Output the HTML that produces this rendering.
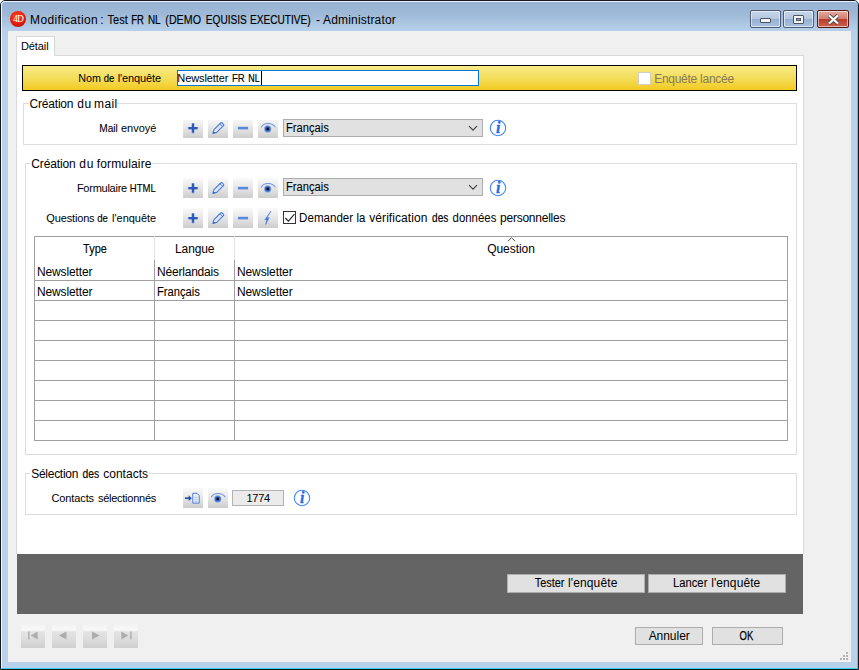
<!DOCTYPE html>
<html lang="fr">
<head>
<meta charset="utf-8">
<title>Modification : Test FR NL (DEMO EQUISIS EXECUTIVE) - Administrator</title>
<style>
*{box-sizing:border-box;margin:0;padding:0}
html,body{width:859px;height:670px;overflow:hidden;background:#fff}
body{font-family:"Liberation Sans",sans-serif;font-size:12px;color:#000;position:relative}
#win,#win *{position:absolute}
#win{left:0;top:0;width:859px;height:670px;overflow:hidden}
#frame{left:0;top:0;width:859px;height:670px;border:1px solid #14181c;border-radius:5px 5px 0 0;
 background:linear-gradient(to bottom,#97b3d3 0,#9fbad7 14px,#afc8e4 24px,#b6cfea 29px,#b9d2ec 40px,#b9d1ea 100%)}
#hl{left:1px;top:1px;width:857px;height:668px;border-top:1px solid rgba(255,255,255,.8);border-left:1px solid rgba(255,255,255,.85);border-right:1px solid #35d2f2;border-bottom:1px solid #35d2f2;border-radius:4px 4px 0 0}
#client{left:8px;top:31px;width:843px;height:631px;background:#f0f0f0}
.t{white-space:nowrap;line-height:16px;height:16px;display:block;transform-origin:0 0}
#panel{left:16px;top:55px;width:788px;height:499px;background:#fff;border:1px solid #d9d9d9;border-bottom:0}
#tab{left:16px;top:36px;width:39px;height:20px;background:#fff;border:1px solid #d9d9d9;border-bottom:0}
#dark{left:17px;top:554px;width:786px;height:60px;background:#646464}
#ybar{left:22px;top:65px;width:775px;height:26px;border:1px solid #000;background:linear-gradient(to bottom,#f8ea88 0,#f4de5c 50%,#f3ca20 100%)}
.ph{left:0;top:0;width:0;height:0}
.grp{border:1px solid #dcdcdc}
.leg{background:#fff}
.ibw{width:20px;overflow:hidden}
.ib{left:0;width:20px;height:20px;background:linear-gradient(to bottom,#fafafa 0,#ececec 35%,#dcdcdc 70%,#cdcdcd 100%)}
.ib svg{left:0;top:0}
.sel{background:#e1e1e1;border:1px solid #adadad}
.btn{background:#e1e1e1;border:1px solid #adadad}
.nav{width:24px;height:24px;background:linear-gradient(to bottom,#f2f2f2 0,#f8f8f8 6px,#e3e3e3 8px,#dbdbdb 16px,#cfcfcf 24px)}
.nav svg{left:0;top:0}
.hline{height:1px;background:#a0a0a0}
.vline{width:1px;background:#a0a0a0}
.cap{top:10px;height:18px;border:1px solid #4f5d75;border-radius:2px;box-shadow:inset 0 0 0 1px rgba(255,255,255,.55)}
</style>
</head>
<body>
<div id="win">
<div id="frame"></div>
<div id="hl"></div>
<div id="client"></div>
<svg style="left:9px;top:10px" width="18" height="18" viewBox="0 0 18 18"><defs><radialGradient id="rg" cx="0.45" cy="0.35" r="0.7"><stop offset="0" stop-color="#ff4a2a"/><stop offset="0.6" stop-color="#e8200e"/><stop offset="1" stop-color="#b81408"/></radialGradient></defs><circle cx="9" cy="9" r="8" fill="url(#rg)"/><text x="9" y="12.4" text-anchor="middle" font-family="Liberation Serif,serif" font-size="9.5" fill="#fff" letter-spacing="-0.8">4D</text></svg>
<div class="cap" style="left:750px;width:31px;background:linear-gradient(to bottom,#c6d6ea 0,#b3c7e1 48%,#97b0d2 52%,#abc2df 100%)"><div style="left:9px;top:7px;width:11px;height:5px;background:#f4f4f4;border:1px solid #4a5563;border-radius:1px"></div></div>
<div class="cap" style="left:783px;width:31px;background:linear-gradient(to bottom,#c6d6ea 0,#b3c7e1 48%,#97b0d2 52%,#abc2df 100%)"><div style="left:9px;top:4px;width:11px;height:9px;background:#f4f4f4;border:1px solid #4a5563;border-radius:1px"></div><div style="left:12px;top:7px;width:5px;height:3px;background:#8ea6c8;border:1px solid #4a5563"></div></div>
<div class="cap" style="left:817px;width:32px;border-color:#5a1a14;background:linear-gradient(to bottom,#e3aaa0 0,#d47e70 48%,#bb3c2a 52%,#cc6450 100%)"><svg style="left:9px;top:3px" width="13" height="11" viewBox="0 0 13 11"><path d="M2 1.5l9 8M11 1.5l-9 8" stroke="#4a4a4a" stroke-width="3.8"/><path d="M2 1.5l9 8M11 1.5l-9 8" stroke="#fff" stroke-width="2.3"/></svg></div>
<div id="panel"></div>
<div id="tab"></div>
<div id="dark"></div>
<div id="ybar"></div>
<div style="left:177px;top:70px;width:302px;height:16px;background:#fff;border:1px solid #0078d7"></div>
<div style="left:261px;top:71px;width:1px;height:13.6px;background:#000"></div>
<div style="left:638px;top:72px;width:13px;height:13px;background:#fff;border:1px solid #d2d0c4"></div>

<div class="grp" style="left:23px;top:103px;width:774px;height:42px"></div>
<div class="leg" style="left:29px;top:98px;width:88px;height:12px"></div>
<div class="ibw" style="left:183px;top:120px;height:18px"><div class="ib" style="top:-2px"><svg width="20" height="20" viewBox="0 0 20 20"><path d="M10 5v10.2M4.9 10.1h10.2" stroke="#5b87dc" stroke-width="2.4" fill="none"/><path d="M10 6v8.2M6 10.1h8" stroke="#2c5ab6" stroke-width="2.2" fill="none"/></svg></div></div><div class="ibw" style="left:208px;top:120px;height:18px"><div class="ib" style="top:-2px"><svg width="20" height="20" viewBox="0 0 20 20"><path d="M4.9 15.4l1.1-3.7 6.7-6.7a1.1 1.1 0 0 1 1.6 0l1.1 1.1a1.1 1.1 0 0 1 0 1.6l-6.7 6.7z" fill="#dfe9fb" stroke="#4a7bd8" stroke-width="1.1" stroke-linejoin="round"/><path d="M12 5.8l2.6 2.6" stroke="#4a7bd8" stroke-width="0.9" fill="none"/><path d="M4.9 15.4l.6-2 1.5 1.5z" fill="#2a56a8"/></svg></div></div><div class="ibw" style="left:233px;top:120px;height:18px"><div class="ib" style="top:-2px"><svg width="20" height="20" viewBox="0 0 20 20"><path d="M4.9 10.1h10.2" stroke="#5a88de" stroke-width="2.6" fill="none"/></svg></div></div><div class="ibw" style="left:258px;top:120px;height:18px"><div class="ib" style="top:-2px"><svg width="20" height="20" viewBox="0 0 20 20"><path d="M3.4 9C6 4.4 13.8 4.2 17 8.8" stroke="#6a90de" stroke-width="1.1" fill="none" stroke-linecap="round"/><circle cx="9.7" cy="10.9" r="3.6" fill="#7ea2e6"/><circle cx="9.7" cy="10.9" r="2.7" fill="#3463c0"/><circle cx="9.7" cy="10.9" r="1.4" fill="#0a0f20"/></svg></div></div>
<div class="sel" style="left:283px;top:119px;width:200px;height:18px"><svg style="right:4px;top:4.5px" width="10" height="7" viewBox="0 0 10 7"><path d="M1 1.2l4 4 4-4" stroke="#444" stroke-width="1.2" fill="none"/></svg></div>
<svg style="left:488px;top:118px;opacity:.99" width="20" height="20" viewBox="0 0 20 20"><circle cx="10" cy="10" r="7.7" fill="#fff" stroke="#3f86ee" stroke-width="1.1"/><text x="10.2" y="15.4" text-anchor="middle" font-family="Liberation Serif,serif" font-style="italic" font-weight="bold" font-size="16" fill="#1f6ce4" stroke="#1f6ce4" stroke-width="0.3">i</text></svg>

<div class="grp" style="left:25px;top:163px;width:772px;height:292px"></div>
<div class="leg" style="left:30px;top:158px;width:122px;height:12px"></div>
<div class="ibw" style="left:183px;top:178px;height:20px"><div class="ib" style="top:0px"><svg width="20" height="20" viewBox="0 0 20 20"><path d="M10 5v10.2M4.9 10.1h10.2" stroke="#5b87dc" stroke-width="2.4" fill="none"/><path d="M10 6v8.2M6 10.1h8" stroke="#2c5ab6" stroke-width="2.2" fill="none"/></svg></div></div><div class="ibw" style="left:208px;top:178px;height:20px"><div class="ib" style="top:0px"><svg width="20" height="20" viewBox="0 0 20 20"><path d="M4.9 15.4l1.1-3.7 6.7-6.7a1.1 1.1 0 0 1 1.6 0l1.1 1.1a1.1 1.1 0 0 1 0 1.6l-6.7 6.7z" fill="#dfe9fb" stroke="#4a7bd8" stroke-width="1.1" stroke-linejoin="round"/><path d="M12 5.8l2.6 2.6" stroke="#4a7bd8" stroke-width="0.9" fill="none"/><path d="M4.9 15.4l.6-2 1.5 1.5z" fill="#2a56a8"/></svg></div></div><div class="ibw" style="left:233px;top:178px;height:20px"><div class="ib" style="top:0px"><svg width="20" height="20" viewBox="0 0 20 20"><path d="M4.9 10.1h10.2" stroke="#5a88de" stroke-width="2.6" fill="none"/></svg></div></div><div class="ibw" style="left:258px;top:178px;height:20px"><div class="ib" style="top:0px"><svg width="20" height="20" viewBox="0 0 20 20"><path d="M3.4 9C6 4.4 13.8 4.2 17 8.8" stroke="#6a90de" stroke-width="1.1" fill="none" stroke-linecap="round"/><circle cx="9.7" cy="10.9" r="3.6" fill="#7ea2e6"/><circle cx="9.7" cy="10.9" r="2.7" fill="#3463c0"/><circle cx="9.7" cy="10.9" r="1.4" fill="#0a0f20"/></svg></div></div>
<div class="sel" style="left:283px;top:178px;width:200px;height:18px"><svg style="right:4px;top:4.5px" width="10" height="7" viewBox="0 0 10 7"><path d="M1 1.2l4 4 4-4" stroke="#444" stroke-width="1.2" fill="none"/></svg></div>
<svg style="left:488px;top:178px;opacity:.99" width="20" height="20" viewBox="0 0 20 20"><circle cx="10" cy="10" r="7.7" fill="#fff" stroke="#3f86ee" stroke-width="1.1"/><text x="10.2" y="15.4" text-anchor="middle" font-family="Liberation Serif,serif" font-style="italic" font-weight="bold" font-size="16" fill="#1f6ce4" stroke="#1f6ce4" stroke-width="0.3">i</text></svg>
<div class="ibw" style="left:183px;top:208px;height:20px"><div class="ib" style="top:0px"><svg width="20" height="20" viewBox="0 0 20 20"><path d="M10 5v10.2M4.9 10.1h10.2" stroke="#5b87dc" stroke-width="2.4" fill="none"/><path d="M10 6v8.2M6 10.1h8" stroke="#2c5ab6" stroke-width="2.2" fill="none"/></svg></div></div><div class="ibw" style="left:208px;top:208px;height:20px"><div class="ib" style="top:0px"><svg width="20" height="20" viewBox="0 0 20 20"><path d="M4.9 15.4l1.1-3.7 6.7-6.7a1.1 1.1 0 0 1 1.6 0l1.1 1.1a1.1 1.1 0 0 1 0 1.6l-6.7 6.7z" fill="#dfe9fb" stroke="#4a7bd8" stroke-width="1.1" stroke-linejoin="round"/><path d="M12 5.8l2.6 2.6" stroke="#4a7bd8" stroke-width="0.9" fill="none"/><path d="M4.9 15.4l.6-2 1.5 1.5z" fill="#2a56a8"/></svg></div></div><div class="ibw" style="left:233px;top:208px;height:20px"><div class="ib" style="top:0px"><svg width="20" height="20" viewBox="0 0 20 20"><path d="M4.9 10.1h10.2" stroke="#5a88de" stroke-width="2.6" fill="none"/></svg></div></div><div class="ibw" style="left:258px;top:208px;height:20px"><div class="ib" style="top:0px"><svg width="20" height="20" viewBox="0 0 20 20"><path d="M13 3L8.6 10.2l2.6-.7L7.6 16.6l1.2-5.2-2 .5z" fill="#3f72d4" stroke="#3f72d4" stroke-width="0.5" stroke-linejoin="round"/></svg></div></div>
<div style="left:283px;top:211px;width:13px;height:13px;background:#fff;border:1px solid #333"><svg style="left:0;top:0" width="11" height="11" viewBox="0 0 11 11"><path d="M1.3 6l3.1 3.1 6-6.9" stroke="#222" stroke-width="1.1" fill="none"/></svg></div>
<div style="left:34px;top:236px;width:754px;height:205px;background:#fff;border:1px solid #a0a0a0"></div><div class="hline" style="left:34px;top:280px;width:754px"></div><div class="hline" style="left:34px;top:300px;width:754px"></div><div class="hline" style="left:34px;top:320px;width:754px"></div><div class="hline" style="left:34px;top:340px;width:754px"></div><div class="hline" style="left:34px;top:360px;width:754px"></div><div class="hline" style="left:34px;top:380px;width:754px"></div><div class="hline" style="left:34px;top:400px;width:754px"></div><div class="hline" style="left:34px;top:420px;width:754px"></div><div class="vline" style="left:154px;top:260px;height:181px"></div><div class="vline" style="left:154px;top:236px;height:24px;background:#e2e2e2"></div><div class="vline" style="left:234px;top:260px;height:181px"></div><div class="vline" style="left:234px;top:236px;height:24px;background:#e2e2e2"></div><svg style="left:507px;top:237px" width="9" height="5" viewBox="0 0 9 5"><path d="M0.8 4.2l3.7-3.4 3.7 3.4" stroke="#555" stroke-width="1" fill="none"/></svg>

<div class="grp" style="left:25px;top:473px;width:772px;height:42px"></div>
<div class="leg" style="left:30px;top:468px;width:119px;height:12px"></div>
<div class="ibw" style="left:183px;top:488px;height:20px"><div class="ib" style="top:0px"><svg width="20" height="20" viewBox="0 0 20 20"><path d="M9.8 5.3h4.2l2.2 2.2v7.6H9.8z" fill="#f2f6fd" stroke="#4a7bd8" stroke-width="1"/><path d="M11.5 9.3h3M11.5 11.3h3M11.5 13.2h3" stroke="#8eaae0" stroke-width="0.8"/><path d="M2 10.2h4.5" stroke="#2350a8" stroke-width="1.7" fill="none"/><path d="M5.6 7.3l3.2 2.9-3.2 2.9z" fill="#2350a8"/></svg></div></div><div class="ibw" style="left:208px;top:488px;height:20px"><div class="ib" style="top:0px"><svg width="20" height="20" viewBox="0 0 20 20"><path d="M3.4 9C6 4.4 13.8 4.2 17 8.8" stroke="#6a90de" stroke-width="1.1" fill="none" stroke-linecap="round"/><circle cx="9.7" cy="10.9" r="3.6" fill="#7ea2e6"/><circle cx="9.7" cy="10.9" r="2.7" fill="#3463c0"/><circle cx="9.7" cy="10.9" r="1.4" fill="#0a0f20"/></svg></div></div>
<div class="sel" style="left:232px;top:490px;width:52px;height:16px;background:#ebebeb;border-color:#b2b2b2"></div>
<svg style="left:292px;top:488px;opacity:.99" width="20" height="20" viewBox="0 0 20 20"><circle cx="10" cy="10" r="7.7" fill="#fff" stroke="#3f86ee" stroke-width="1.1"/><text x="10.2" y="15.4" text-anchor="middle" font-family="Liberation Serif,serif" font-style="italic" font-weight="bold" font-size="16" fill="#1f6ce4" stroke="#1f6ce4" stroke-width="0.3">i</text></svg>

<div class="btn" style="left:507px;top:574px;width:138px;height:19px"></div>
<div class="btn" style="left:648px;top:574px;width:138px;height:19px"></div>
<div class="btn" style="left:635px;top:627px;width:68px;height:18px"></div>
<div class="btn" style="left:712px;top:627px;width:71px;height:18px"></div>
<div class="nav" style="left:21px;top:624px"><svg width="24" height="24" viewBox="0 0 24 24"><path d="M7.8 7.5v8" stroke="#adadad" stroke-width="1.4"/><path d="M16.7 7.5v8l-7-4z" fill="#adadad"/></svg></div><div class="nav" style="left:52px;top:624px"><svg width="24" height="24" viewBox="0 0 24 24"><path d="M14.5 7.5v8l-7.6-4z" fill="#adadad"/></svg></div><div class="nav" style="left:83px;top:624px"><svg width="24" height="24" viewBox="0 0 24 24"><path d="M9 7.5v8l7.6-4z" fill="#adadad"/></svg></div><div class="nav" style="left:114px;top:624px"><svg width="24" height="24" viewBox="0 0 24 24"><path d="M16.9 7.5v8" stroke="#adadad" stroke-width="1.4"/><path d="M7.3 7.5v8l7-4z" fill="#adadad"/></svg></div>
<svg style="left:839px;top:650px" width="12" height="12" viewBox="0 0 12 12"><g fill="#b4b4b4"><rect x="7" y="2" width="2" height="2"/><rect x="4" y="5" width="2" height="2"/><rect x="7" y="5" width="2" height="2"/><rect x="1" y="8" width="2" height="2"/><rect x="4" y="8" width="2" height="2"/><rect x="7" y="8" width="2" height="2"/></g></svg>
<div class="ph" id="title">
<span id="title_0" class="t" style="left:30.10px;top:12px;font-size:12px;letter-spacing:0.319px;">Modification</span>
<span id="title_1" class="t" style="left:100.35px;top:12px;font-size:12px;">:</span>
<span id="title_2" class="t" style="left:107px;top:12px;font-size:12px;transform:translateX(0.50px) scaleX(0.9197);-webkit-text-stroke:0.10px currentColor;">Test</span>
<span id="title_3" class="t" style="left:131px;top:12px;font-size:12px;transform:translateX(0.25px) scaleX(0.7901);-webkit-text-stroke:0.25px currentColor;">FR</span>
<span id="title_4" class="t" style="left:148px;top:12px;font-size:12px;transform:translateX(0.00px) scaleX(0.8219);-webkit-text-stroke:0.21px currentColor;">NL</span>
<span id="title_5" class="t" style="left:165px;top:12px;font-size:12px;transform:translateX(0.35px) scaleX(0.8896);-webkit-text-stroke:0.13px currentColor;">(DEMO</span>
<span id="title_6" class="t" style="left:205px;top:12px;font-size:12px;transform:translateX(0.80px) scaleX(0.8412);-webkit-text-stroke:0.19px currentColor;">EQUISIS</span>
<span id="title_7" class="t" style="left:250px;top:12px;font-size:12px;transform:translateX(0.00px) scaleX(0.8434);-webkit-text-stroke:0.19px currentColor;">EXECUTIVE)</span>
<span id="title_8" class="t" style="left:316.09px;top:12px;font-size:12px;">-</span>
<span id="title_9" class="t" style="left:323.05px;top:12px;font-size:12px;letter-spacing:0.168px;">Administrator</span>
</div>
<div class="ph" id="tabl">
<span id="tabl_0" class="t" style="left:21.00px;top:38px;font-size:11px;letter-spacing:-0.100px;">Détail</span>
</div>
<div class="ph" id="nom">
<span id="nom_0" class="t" style="left:78px;top:70px;font-size:11px;transform:translateX(0.20px) scaleX(0.9771);">Nom</span>
<span id="nom_1" class="t" style="left:103px;top:70px;font-size:11px;transform:translateX(0.80px) scaleX(0.8669);-webkit-text-stroke:0.16px currentColor;">de</span>
<span id="nom_2" class="t" style="left:117.80px;top:70px;font-size:11px;letter-spacing:-0.125px;">l'enquête</span>
</div>
<div class="ph" id="inp">
<span id="inp_0" class="t" style="left:177.30px;top:70px;font-size:11px;letter-spacing:-0.083px;">Newsletter</span>
<span id="inp_1" class="t" style="left:231px;top:70px;font-size:11px;transform:translateX(0.90px) scaleX(0.8685);-webkit-text-stroke:0.16px currentColor;">FR</span>
<span id="inp_2" class="t" style="left:248px;top:70px;font-size:11px;transform:translateX(0.35px) scaleX(0.8042);-webkit-text-stroke:0.23px currentColor;">NL</span>
</div>
<div class="ph" id="enq">
<span id="enq_0" class="t" style="left:654.20px;top:71px;font-size:12px;letter-spacing:-0.292px;color:#877a58;">Enquête</span>
<span id="enq_1" class="t" style="left:700.10px;top:71px;font-size:12px;letter-spacing:-0.250px;color:#877a58;">lancée</span>
</div>
<div class="ph" id="g1">
<span id="g1_0" class="t" style="left:29.45px;top:96px;font-size:12px;letter-spacing:-0.179px;">Création</span>
<span id="g1_1" class="t" style="left:77.15px;top:96px;font-size:12px;letter-spacing:0.750px;">du</span>
<span id="g1_2" class="t" style="left:94.00px;top:96px;font-size:12px;letter-spacing:0.416px;">mail</span>
</div>
<div class="ph" id="mail">
<span id="mail_0" class="t" style="left:99px;top:120px;font-size:11px;transform:translateX(0.20px) scaleX(0.9205);-webkit-text-stroke:0.10px currentColor;">Mail</span>
<span id="mail_1" class="t" style="left:121.00px;top:120px;font-size:11px;">envoyé</span>
</div>
<div class="ph" id="fr1">
<span id="fr1_0" class="t" style="left:285px;top:120px;font-size:12px;transform:translateX(0.90px) scaleX(0.9330);-webkit-text-stroke:0.08px currentColor;">Français</span>
</div>
<div class="ph" id="g2">
<span id="g2_0" class="t" style="left:31.25px;top:156px;font-size:12px;letter-spacing:-0.143px;">Création</span>
<span id="g2_1" class="t" style="left:79.35px;top:156px;font-size:12px;letter-spacing:0.750px;">du</span>
<span id="g2_2" class="t" style="left:96.65px;top:156px;font-size:12px;letter-spacing:0.166px;">formulaire</span>
</div>
<div class="ph" id="form">
<span id="form_0" class="t" style="left:76.90px;top:180px;font-size:11px;letter-spacing:-0.249px;">Formulaire</span>
<span id="form_1" class="t" style="left:129px;top:180px;font-size:11px;transform:translateX(0.80px) scaleX(0.8696);-webkit-text-stroke:0.16px currentColor;">HTML</span>
</div>
<div class="ph" id="fr2">
<span id="fr2_0" class="t" style="left:285px;top:179px;font-size:12px;transform:translateX(0.90px) scaleX(0.9330);-webkit-text-stroke:0.08px currentColor;">Français</span>
</div>
<div class="ph" id="ques">
<span id="ques_0" class="t" style="left:46.35px;top:210px;font-size:11px;letter-spacing:-0.158px;">Questions</span>
<span id="ques_1" class="t" style="left:97px;top:210px;font-size:11px;transform:translateX(0.30px) scaleX(0.8669);-webkit-text-stroke:0.16px currentColor;">de</span>
<span id="ques_2" class="t" style="left:112.10px;top:210px;font-size:11px;letter-spacing:-0.033px;">l'enquête</span>
</div>
<div class="ph" id="dem">
<span id="dem_0" class="t" style="left:299px;top:210px;font-size:12px;transform:translateX(0.10px) scaleX(0.9636);">Demander</span>
<span id="dem_1" class="t" style="left:356px;top:210px;font-size:12px;transform:translateX(0.40px) scaleX(0.9412);-webkit-text-stroke:0.07px currentColor;">la</span>
<span id="dem_2" class="t" style="left:369.25px;top:210px;font-size:12px;letter-spacing:0.069px;">vérification</span>
<span id="dem_3" class="t" style="left:432px;top:210px;font-size:12px;transform:translateX(0.10px) scaleX(0.8358);-webkit-text-stroke:0.20px currentColor;">des</span>
<span id="dem_4" class="t" style="left:452px;top:210px;font-size:12px;transform:translateX(0.60px) scaleX(0.9501);">données</span>
<span id="dem_5" class="t" style="left:500.10px;top:210px;font-size:12px;letter-spacing:-0.249px;">personnelles</span>
</div>
<div class="ph" id="hType">
<span id="hType_0" class="t" style="left:83px;top:241px;font-size:12px;transform:translateX(0.10px) scaleX(0.9101);-webkit-text-stroke:0.11px currentColor;">Type</span>
</div>
<div class="ph" id="hLang">
<span id="hLang_0" class="t" style="left:175.00px;top:241px;font-size:12px;letter-spacing:-0.100px;">Langue</span>
</div>
<div class="ph" id="hQues">
<span id="hQues_0" class="t" style="left:487.15px;top:241px;font-size:12px;letter-spacing:-0.036px;">Question</span>
</div>
<div class="ph" id="r1a">
<span id="r1a_0" class="t" style="left:37.00px;top:264px;font-size:12px;letter-spacing:-0.139px;">Newsletter</span>
</div>
<div class="ph" id="r1b">
<span id="r1b_0" class="t" style="left:157.00px;top:264px;font-size:12px;letter-spacing:-0.200px;">Néerlandais</span>
</div>
<div class="ph" id="r1c">
<span id="r1c_0" class="t" style="left:237.00px;top:264px;font-size:12px;letter-spacing:-0.112px;">Newsletter</span>
</div>
<div class="ph" id="r2a">
<span id="r2a_0" class="t" style="left:37.00px;top:284px;font-size:12px;letter-spacing:-0.139px;">Newsletter</span>
</div>
<div class="ph" id="r2b">
<span id="r2b_0" class="t" style="left:157px;top:284px;font-size:12px;transform:translateX(0.00px) scaleX(0.9324);-webkit-text-stroke:0.08px currentColor;">Français</span>
</div>
<div class="ph" id="r2c">
<span id="r2c_0" class="t" style="left:237.00px;top:284px;font-size:12px;letter-spacing:-0.112px;">Newsletter</span>
</div>
<div class="ph" id="g3">
<span id="g3_0" class="t" style="left:31.25px;top:466px;font-size:12px;letter-spacing:-0.282px;">Sélection</span>
<span id="g3_1" class="t" style="left:82px;top:466px;font-size:12px;transform:translateX(0.40px) scaleX(0.8632);-webkit-text-stroke:0.16px currentColor;">des</span>
<span id="g3_2" class="t" style="left:103.15px;top:466px;font-size:12px;letter-spacing:0.035px;">contacts</span>
</div>
<div class="ph" id="cont">
<span id="cont_0" class="t" style="left:51.45px;top:490px;font-size:11px;letter-spacing:-0.108px;">Contacts</span>
<span id="cont_1" class="t" style="left:97.90px;top:490px;font-size:11px;letter-spacing:-0.251px;">sélectionnés</span>
</div>
<div class="ph" id="n1774">
<span id="n1774_0" class="t" style="left:246.40px;top:490px;font-size:11px;letter-spacing:-0.250px;">1774</span>
</div>
<div class="ph" id="bTest">
<span id="bTest_0" class="t" style="left:534px;top:575px;font-size:12px;transform:translateX(0.80px) scaleX(0.9070);-webkit-text-stroke:0.11px currentColor;">Tester</span>
<span id="bTest_1" class="t" style="left:568.00px;top:575px;font-size:12px;letter-spacing:0.125px;">l'enquête</span>
</div>
<div class="ph" id="bLanc">
<span id="bLanc_0" class="t" style="left:673px;top:575px;font-size:12px;transform:translateX(0.00px) scaleX(0.9367);-webkit-text-stroke:0.08px currentColor;">Lancer</span>
<span id="bLanc_1" class="t" style="left:711.20px;top:575px;font-size:12px;letter-spacing:0.095px;">l'enquête</span>
</div>
<div class="ph" id="bAnn">
<span id="bAnn_0" class="t" style="left:648.65px;top:628px;font-size:12px;letter-spacing:-0.041px;">Annuler</span>
</div>
<div class="ph" id="bOk">
<span id="bOk_0" class="t" style="left:739px;top:628px;font-size:12px;transform:translateX(0.60px) scaleX(0.7880);-webkit-text-stroke:0.25px currentColor;">OK</span>
</div>
</div>
</body>
</html>
